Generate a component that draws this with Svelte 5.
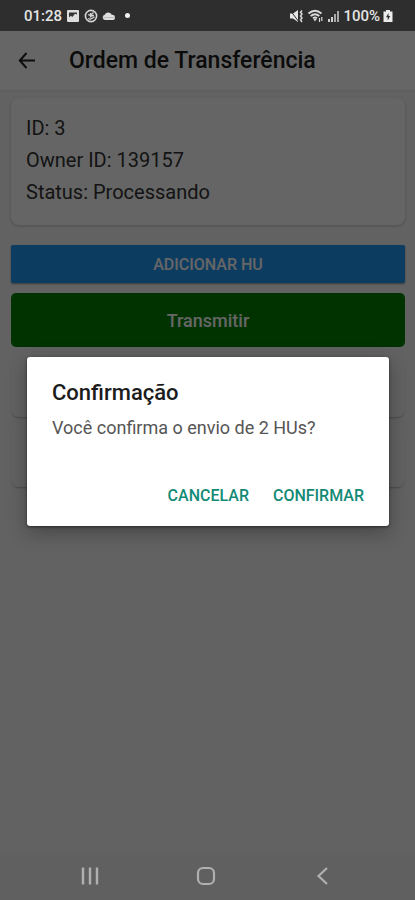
<!--
  Transfer order screen with the send confirmation open on top.
  The scrim covers the app only: status bar and navigation bar keep
  their own colours.
-->
<script lang="ts">
  let order = $state({ id: 3, ownerId: 139157, status: 'Processando' });
  let units = $state(['', '']);
  let confirming = $state(true);

  function close() {
    confirming = false;
  }
</script>

<div class="phone">
  <div class="statusbar">
    <div class="group left">
      <span class="clock">01:28</span>
      <svg width="14" height="14" viewBox="0 0 14 14" aria-hidden="true">
        <rect x="1" y="1" width="12" height="12" rx="1" fill="#dedede" />
        <path d="M3 8.500V3.500h8v2L9 4.800 6.300 8 4.800 6.800z" fill="#333" />
      </svg>
      <svg width="14" height="14" viewBox="0 0 14 14" fill="none" stroke="#d4d4d4" aria-hidden="true">
        <circle cx="7" cy="7" r="5.600" stroke-width="1.600" />
        <path d="M4 5.500l2.500 1L9.500 3.500M7 7l3-.5M4 9.500l2 .8L10.500 8M6.500 4v4.500" stroke-width="1.300" />
      </svg>
      <svg width="14" height="14" viewBox="0 0 14 14" fill="#dedede" aria-hidden="true">
        <path d="M3 11a2.700 2.700 0 0 1-.3-5.300 4 4 0 0 1 7.300.2A2.600 2.600 0 0 1 11 11z" />
        <path d="M1 8.500h12" stroke="#bbb" stroke-width="1" />
      </svg>
      <i class="dot"></i>
    </div>
    <div class="group right">
      <svg width="15" height="14" viewBox="0 0 15 14" aria-hidden="true">
        <path d="M1 4.500h3l5-3.500v12L4 9.500H1z" fill="#e6e6e6" />
        <path d="M1 1l9 12" stroke="#2e2e2e" stroke-width="1" />
        <path d="M13 1.500l-1.500 1.800L13 5l-1.500 2L13 9l-1.500 1.800L13 13" fill="none" stroke="#d8d8d8" stroke-width="1.500" />
      </svg>
      <svg width="17" height="14" viewBox="0 0 17 14" fill="none" stroke="#dadada" aria-hidden="true">
        <path d="M1.500 4.500c4-3.400 9-3.400 13 0M3.700 7c2.700-2.200 5.900-2.200 8.600 0M6 9.300c1.300-1 2.700-1 4 0" stroke-width="1.900" />
        <path d="M8 12.500L6.300 10h3.400z" fill="#dadada" stroke="none" />
        <path d="M12.500 9v4M14.800 8v4" stroke-width="1.200" />
      </svg>
      <svg width="13" height="14" viewBox="0 0 13 14" aria-hidden="true">
        <path d="M1 10h2v3H1zM4 8h2v5H4z" fill="#d0d0d0" />
        <path d="M7 5h2v8H7zM10 2h2v11h-2z" fill="#a6a6a6" />
      </svg>
      <span class="percent">100%</span>
      <svg width="10" height="14" viewBox="0 0 10 14" aria-hidden="true">
        <path d="M3 1h4v1.500h2.500V13h-9V2.500H3z" fill="#ececec" />
        <path d="M5.500 4L3 8.300h1.700V11.500L7.200 7H5.500z" fill="#2e2e2e" />
      </svg>
    </div>
  </div>

  <div class="app">
    <header>
      <button class="back" aria-label="Voltar">
        <svg width="18" height="18" viewBox="0 0 18 18" fill="none" stroke="#222" stroke-width="2">
          <path d="M8.500 1L1.800 8.500l6.700 7.500M2 8.500h15" />
        </svg>
      </button>
      <h1>Ordem de Transferência</h1>
    </header>

    <main>
      <section class="card details">
        <p>ID: {order.id}</p>
        <p>Owner ID: {order.ownerId}</p>
        <p>Status: {order.status}</p>
      </section>
      <button class="add">ADICIONAR HU</button>
      <button class="send" onclick={() => (confirming = true)}>Transmitir</button>
      {#each units as unit}
        <div class="card unit">{unit}</div>
      {/each}
    </main>

    {#if confirming}
      <div class="scrim">
        <div class="dialog" role="alertdialog" aria-modal="true" aria-labelledby="dlg-title" aria-describedby="dlg-text">
          <h2 id="dlg-title">Confirmação</h2>
          <p id="dlg-text">Você confirma o envio de 2 HUs?</p>
          <div class="actions">
            <button onclick={close}>CANCELAR</button>
            <button onclick={close}>CONFIRMAR</button>
          </div>
        </div>
      </div>
    {/if}
  </div>

  <nav>
    <button aria-label="Recentes">
      <svg width="18" height="18" viewBox="0 0 18 18" stroke="#b0b0b0" stroke-width="2.400">
        <path d="M2 0.500v17M9 0.500v17M16 0.500v17" />
      </svg>
    </button>
    <button aria-label="Início">
      <svg width="20" height="20" viewBox="0 0 20 20" fill="none" stroke="#b0b0b0" stroke-width="2.200">
        <rect x="2" y="2" width="16" height="16" rx="5" />
      </svg>
    </button>
    <button aria-label="Voltar">
      <svg width="18" height="18" viewBox="0 0 18 18" fill="none" stroke="#b0b0b0" stroke-width="2.200">
        <path d="M14 1L5.500 9l8.500 8" />
      </svg>
    </button>
  </nav>
</div>

<style>
  :global(body) {
    margin: 0;
    background: #616161;
  }

  .phone {
    display: flex;
    flex-direction: column;
    min-height: 100vh;
    font-family: Roboto, sans-serif;
  }

  button {
    font-family: inherit;
    border: 0;
    padding: 0;
    background: none;
    cursor: pointer;
  }
  svg { display: block; flex: none; }
  h1, h2, p { margin: 0; }

  .statusbar {
    display: flex;
    justify-content: space-between;
    align-items: center;
    height: 31px;
    padding: 0 22px 0 24px;
    background: #2e2e2e;
    color: #e4e4e4;
    font-size: 15px;
    font-weight: 500;
  }
  .group { display: flex; align-items: center; }
  .left { gap: 4px; }
  .right { gap: 3px; }
  .dot {
    width: 5px;
    height: 5px;
    margin-left: 5px;
    border-radius: 50%;
    background: #f0f0f0;
  }

  .app {
    position: relative;
    flex: 1;
    background: #f4f4f4;
  }

  header {
    display: flex;
    align-items: center;
    gap: 33px;
    height: 59px;
    padding: 0 18px;
    background: #fff;
    box-shadow: 0 1px 1px rgba(0, 0, 0, 0.04);
  }
  h1 {
    font-size: 23px;
    line-height: 28px;
    font-weight: 500;
    color: #1c1c1c;
  }

  main {
    display: flex;
    flex-direction: column;
    gap: 10px;
    padding: 8px 10px 8px 11px;
  }
  .card {
    border-radius: 8px;
    background: #fcfcfc;
    box-shadow: 0 1px 3px rgba(0, 0, 0, 0.2);
  }
  .details {
    padding: 14px 16px 17px 15px;
    margin-bottom: 10px;
    font-size: 20px;
    line-height: 32px;
    color: #333;
  }
  /* flat cards: only the lower edge carries a shadow */
  .unit {
    height: 60px;
    background: #f4f4f4;
    box-shadow: 0 2px 2px -1px rgba(0, 0, 0, 0.25);
  }

  .add {
    height: 38px;
    border-radius: 2px;
    background: #2196f3;
    color: #fff;
    font-size: 16px;
    font-weight: 500;
    box-shadow: 0 1px 2px rgba(0, 0, 0, 0.4);
  }
  .send {
    height: 54px;
    border-radius: 5px;
    background: #008000;
    color: #fff;
    font-size: 18px;
    font-weight: 500;
  }

  .scrim {
    position: absolute;
    inset: 0;
    display: flex;
    align-items: center;
    padding: 0 26px 0 27px;
    background: rgba(0, 0, 0, 0.6);
  }
  .dialog {
    flex: 1;
    padding: 21px 25px 12px;
    border-radius: 3px;
    background: #fff;
    box-shadow: 0 6px 20px rgba(0, 0, 0, 0.3), 0 1px 3px rgba(0, 0, 0, 0.5);
  }
  h2 {
    font-size: 22px;
    line-height: 30px;
    font-weight: 500;
    color: #1c1c1c;
  }
  .dialog p {
    padding: 6px 0 34px;
    font-size: 18px;
    line-height: 28px;
    color: #555;
  }
  .actions {
    display: flex;
    justify-content: flex-end;
    gap: 24px;
  }
  .actions button {
    height: 38px;
    font-size: 16px;
    font-weight: 500;
    color: #138a76;
  }

  nav {
    display: grid;
    grid-template-columns: repeat(3, 116px);
    justify-content: center;
    height: 48px;
    padding-right: 4px;
    background: #606060;
  }
  nav button {
    display: grid;
    place-items: center;
  }
</style>
